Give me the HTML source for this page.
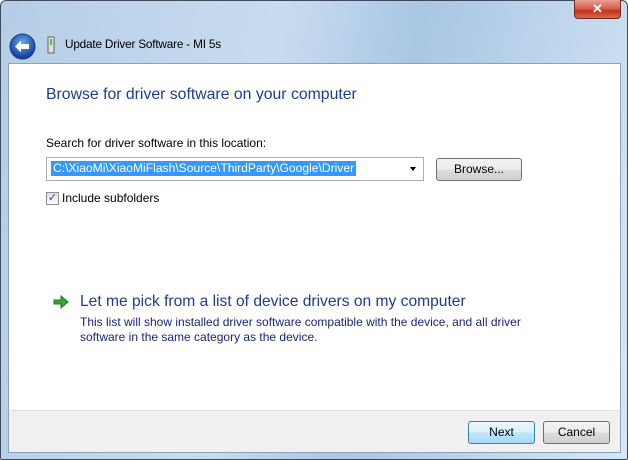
<!DOCTYPE html>
<html><head><style>
body{margin:0;width:628px;height:460px;overflow:hidden;font-family:"Liberation Sans",sans-serif;font-size:12px;background:#fff}
.frame{position:absolute;left:0;top:0;width:626px;height:458px;border:1px solid #3c4a5c;border-radius:6px 6px 2px 2px;background:linear-gradient(100deg,#b4cde6 0%,#c9dcef 40%,#a9c6e4 60%,#d6e6f5 100%)}
.content{position:absolute;left:8px;top:63px;width:611px;height:347px;background:#fff;border:1px solid #8da2ba;border-bottom:none}
.bottom{position:absolute;left:8px;top:410px;width:611px;height:41px;background:#f0f0f0;border:1px solid #8da2ba;border-top:1px solid #dfdfdf}
.abs{position:absolute}
.btn{position:absolute;height:21px;border:1px solid #707070;border-radius:3px;background:linear-gradient(#f2f2f2 0%,#ebebeb 50%,#dddddd 51%,#cfcfcf 100%);text-align:center;line-height:21px;font-size:12px;color:#000}
</style></head><body>
<div class="frame"></div>
<div class="abs" style="left:574px;top:0;width:45px;height:18px;border:1px solid #6d2d22;border-top:none;border-radius:0 0 4px 4px;background:linear-gradient(#e8a190 0%,#d35a44 50%,#c2311b 60%,#d86a4e 100%);color:#fff;text-align:center;font-weight:bold;font-size:13px;line-height:17px">✕</div>
<svg class="abs" style="left:9px;top:33px" width="27" height="27" viewBox="0 0 27 27"><defs><radialGradient id="g" cx="50%" cy="35%" r="60%"><stop offset="0" stop-color="#6aa6ee"/><stop offset="1" stop-color="#123f9b"/></radialGradient></defs><circle cx="13.5" cy="13.5" r="12.5" fill="url(#g)" stroke="#1b3c7a"/><path d="M6 13.5 L12 7.5 L12 11 L20 11 L20 16 L12 16 L12 19.5 Z" fill="#fff"/></svg>
<svg class="abs" style="left:47px;top:36px" width="8" height="18"><rect x="1" y="1" width="6" height="16" fill="#ddd" stroke="#666"/><rect x="3" y="3" width="2" height="6" fill="#4c4"/></svg>
<div class="abs" style="left:65px;top:37px;font-size:11.8px;color:#000;letter-spacing:-0.2px">Update Driver Software - MI 5s</div>
<div class="content"></div>
<div class="bottom"></div>
<div class="abs" style="left:46px;top:86px;font-size:15.8px;color:#1e3a9a">Browse for driver software on your computer</div>
<div class="abs" style="left:46px;top:136px;color:#000">Search for driver software in this location:</div>
<div class="abs" style="left:46px;top:157px;width:376px;height:22px;border:1px solid #abadb3;background:#fff"></div>
<div class="abs" style="left:51px;top:161px;height:15px;background:#3399ff;color:#fff;line-height:15px;padding:0 2px;font-size:12.1px">C:\XiaoMi\XiaoMiFlash\Source\ThirdParty\Google\Driver</div>
<div class="abs" style="left:410px;top:167px;width:0;height:0;border-left:3.5px solid transparent;border-right:3.5px solid transparent;border-top:4px solid #000"></div>
<div class="btn" style="left:436px;top:158px;width:84px">Browse...</div>
<div class="abs" style="left:46px;top:192px;width:11px;height:11px;border:1px solid #8f8f8f;background:linear-gradient(#dedede,#fafafa);font-size:11px;line-height:11px;text-align:center;color:#2a4a8a">✓</div>
<div class="abs" style="left:62px;top:191px;color:#000">Include subfolders</div>
<svg class="abs" style="left:53px;top:295px" width="16" height="14"><path d="M1 5 L8 5 L8 1 L15 7 L8 13 L8 9 L1 9 Z" fill="#34a834" stroke="#1f7a1f" stroke-width="1"/></svg>
<div class="abs" style="left:80px;top:293px;font-size:15.6px;color:#1e3a9a">Let me pick from a list of device drivers on my computer</div>
<div class="abs" style="left:80px;top:315px;color:#1a237e;line-height:15px">This list will show installed driver software compatible with the device, and all driver<br>software in the same category as the device.</div>
<div class="btn" style="left:468px;top:421px;width:65px;border-color:#3c7fb1;background:linear-gradient(#eaf6fd 0%,#d9f0fc 50%,#bee6fd 51%,#a7d9f5 100%)">Next</div>
<div class="btn" style="left:543px;top:421px;width:65px">Cancel</div>
</body></html>
